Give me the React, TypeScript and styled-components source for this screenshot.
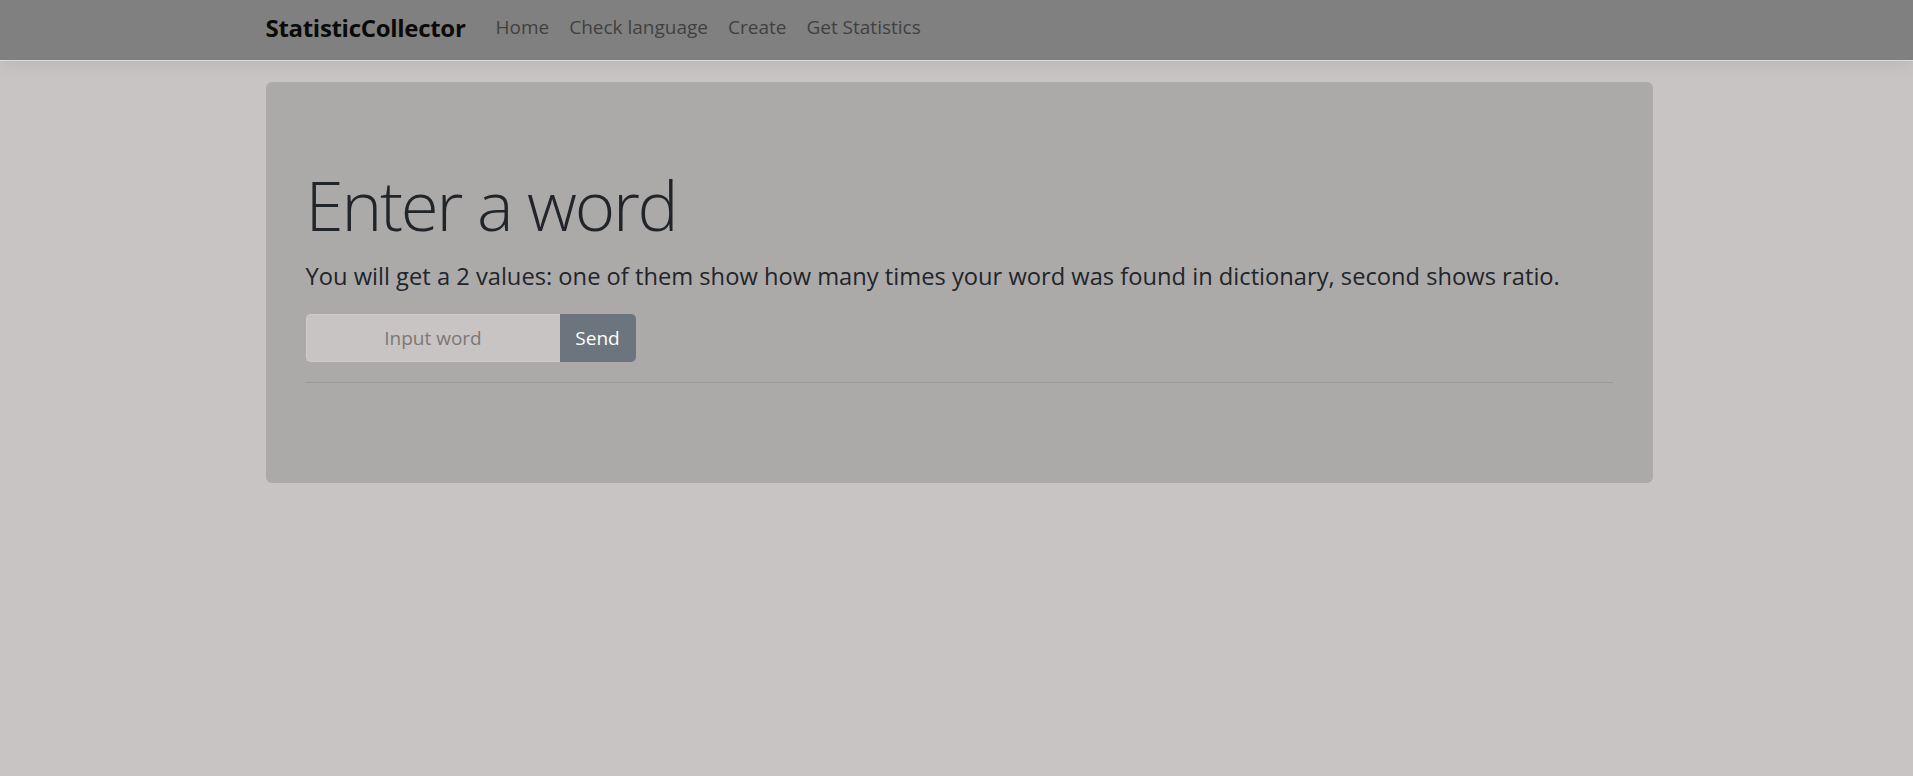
import React from "react";
import styled, { createGlobalStyle } from "styled-components";

const Global = createGlobalStyle`
  html, body { margin: 0; padding: 0; }
  body {
    background: #c8c4c3;
    font-family: "Open Sans", "Noto Sans", sans-serif;
    color: #212529;
    min-height: 776px;
  }
`;

const NavBar = styled.header`
  height: 60px;
  background: #808080;
  border-bottom: 1px solid #dcdcdc;
  box-shadow: 0 5px 14px rgba(0, 0, 0, 0.06);
  margin-bottom: 21px;
`;

const Container = styled.div`
  width: 1387px;
  margin-left: calc(50% - 691px);
`;

const NavInner = styled(Container)`
  display: flex;
  align-items: center;
  height: 60px;
`;

const Brand = styled.a`
  font-size: 24px;
  font-weight: 700;
  color: #0a0a0a;
  margin-right: 20px;
  text-decoration: none;
  letter-spacing: -0.3px;
  margin-top: -6px;
`;

const NavList = styled.nav`
  display: flex;
  margin-top: -6px;
`;

const NavLink = styled.a`
  padding: 0 10px;
  font-size: 19px;
  color: #404040;
  text-decoration: none;
`;

const Jumbo = styled.section`
  background: #acaaa9;
  border-radius: 6px;
  padding: 80px 40px;
`;

const Title = styled.h1`
  font-size: 69px;
  font-weight: 300;
  line-height: 84px;
  margin: 0 0 10px;
  letter-spacing: -2.2px;
`;

const Lead = styled.p`
  font-size: 23.7px;
  font-weight: 400;
  line-height: 37.5px;
  margin: 0 0 20px;
  padding-top: 2px;
`;

const Form = styled.form`
  display: flex;
  height: 48px;
  margin-top: -2px;
`;

const Input = styled.input`
  width: 254px;
  box-sizing: border-box;
  height: 48px;
  border: 1px solid #d0cccb;
  border-right: none;
  border-radius: 5px 0 0 5px;
  background: #c8c4c3;
  font-family: inherit;
  font-size: 19px;
  text-align: center;
  color: #495057;
  outline: none;
  &::placeholder { color: #7b7877; }
`;

const Button = styled.button`
  width: 76px;
  height: 48px;
  border: none;
  border-radius: 0 5px 5px 0;
  background: #6c757d;
  color: #ffffff;
  font-family: inherit;
  font-size: 19px;
  cursor: pointer;
`;

const Rule = styled.hr`
  margin: 20px 0;
  border: 0;
  border-top: 1px solid #9c9a99;
`;

export default function App() {
  return (
    <>
      <Global />
      <NavBar>
        <NavInner>
          <Brand href="#">StatisticCollector</Brand>
          <NavList>
            <NavLink href="#">Home</NavLink>
            <NavLink href="#">Check language</NavLink>
            <NavLink href="#">Create</NavLink>
            <NavLink href="#">Get Statistics</NavLink>
          </NavList>
        </NavInner>
      </NavBar>
      <Container>
        <Jumbo>
          <Title>Enter a word</Title>
          <Lead>
            You will get a 2 values: one of them show how many times your word was found in dictionary, second shows ratio.
          </Lead>
          <Form onSubmit={(e) => e.preventDefault()}>
            <Input placeholder="Input word" />
            <Button type="submit">Send</Button>
          </Form>
          <Rule />
        </Jumbo>
      </Container>
    </>
  );
}
